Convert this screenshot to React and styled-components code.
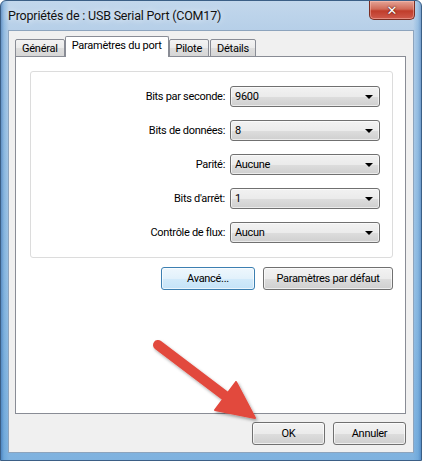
import React from "react"
import styled, { createGlobalStyle } from "styled-components"

const Global = createGlobalStyle`
  html, body {
    margin: 0;
    padding: 0;
    background: #ffffff;
  }
  * {
    box-sizing: border-box;
  }
`

const Window = styled.div`
  position: relative;
  width: 422px;
  height: 461px;
  display: flex;
  flex-direction: column;
  padding: 0 7px 7px;
  border: 1px solid #3b5f86;
  border-radius: 6px 6px 0 0;
  background:
    linear-gradient(90deg, rgba(40, 100, 170, 0.55) 0, rgba(80, 150, 210, 0.35) 3px, rgba(0, 0, 0, 0) 8px),
    linear-gradient(270deg, rgba(40, 100, 170, 0.45) 0, rgba(80, 150, 210, 0.3) 3px, rgba(0, 0, 0, 0) 8px),
    linear-gradient(180deg, #c2d7ec 0, #b6cfe8 30px, #9cc3e5 60%, #7fb2df 100%);
  font-family: Roboto, "Liberation Sans", Arial, sans-serif;
  color: #000;
  overflow: hidden;
`

const TitleBar = styled.div`
  height: 29px;
  display: flex;
  align-items: flex-start;
  justify-content: space-between;
`

const Title = styled.div`
  margin-top: 7px;
  font-size: 12.5px;
  letter-spacing: -0.2px;
  color: #111;
  text-shadow: 0 0 6px rgba(255, 255, 255, 0.9);
`

const CloseButton = styled.div`
  width: 46px;
  height: 19px;
  margin-right: -1px;
  display: flex;
  align-items: center;
  justify-content: center;
  border: 1px solid #7a2d22;
  border-top: none;
  border-radius: 0 0 5px 5px;
  background: linear-gradient(180deg, #e4a496 0, #d06a58 45%, #c03d2b 55%, #cf5a4c 100%);
  box-shadow: inset 0 0 0 1px rgba(255, 200, 190, 0.45);
  color: #fff;
  font-family: "DejaVu Sans", sans-serif;
  font-weight: bold;
  font-size: 13px;
  text-shadow: 0 0 2px #5a1a10, 0 0 1px #5a1a10;
`

const Client = styled.div`
  flex: 1;
  display: flex;
  flex-direction: column;
  padding: 5px 7px 7px 6px;
  background: #f0f0f0;
  border: 1px solid #8da4bd;
`

const Tabs = styled.div`
  display: flex;
  align-items: flex-end;
  height: 21px;
  position: relative;
  z-index: 1;
`

const Tab = styled.div`
  height: ${(p) => (p.$active ? "21px" : "18px")};
  padding: 0 6px;
  padding-bottom: ${(p) => (p.$active ? "3px" : "0")};
  margin-left: ${(p) => (p.$active ? "-1px" : "0")};
  margin-right: ${(p) => (p.$active ? "0" : "1px")};
  display: flex;
  align-items: center;
  font-size: 11px;
  letter-spacing: -0.25px;
  border: 1px solid #898c95;
  border-bottom: ${(p) => (p.$active ? "none" : "1px solid #898c95")};
  border-radius: 2px 2px 0 0;
  background: ${(p) =>
    p.$active
      ? "#ffffff"
      : "linear-gradient(180deg, #f3f3f3 0, #ebebeb 50%, #dedede 51%, #d6d6d6 100%)"};
  position: relative;
  z-index: ${(p) => (p.$active ? 2 : 0)};
`

const Panel = styled.div`
  flex: 1;
  display: flex;
  flex-direction: column;
  align-items: flex-end;
  margin-top: -1px;
  padding: 14px 12px 0 14px;
  background: #ffffff;
  border: 1px solid #898c95;
`

const Group = styled.div`
  align-self: stretch;
  display: grid;
  grid-template-columns: 1fr 150px;
  column-gap: 5px;
  row-gap: 13px;
  align-items: center;
  padding: 14px 12px 14px 0;
  border: 1px solid #dcdcdc;
  border-radius: 3px;
`

const Label = styled.div`
  text-align: right;
  font-size: 11px;
  letter-spacing: -0.3px;
`

const Combo = styled.div`
  height: 21px;
  display: flex;
  align-items: center;
  justify-content: space-between;
  padding: 0 6px 0 4px;
  font-size: 11px;
  letter-spacing: -0.3px;
  border: 1px solid #707070;
  border-radius: 3px;
  background: linear-gradient(180deg, #f2f2f2 0, #ebebeb 50%, #dddddd 51%, #cfcfcf 100%);
  box-shadow: inset 0 0 0 1px rgba(255, 255, 255, 0.6);
`

const Caret = styled.span`
  width: 0;
  height: 0;
  border-left: 4px solid transparent;
  border-right: 4px solid transparent;
  border-top: 4px solid #000;
  margin-top: 1px;
`

const ButtonRow = styled.div`
  display: flex;
  gap: 8px;
  margin-top: 9px;
`

const Button = styled.div`
  width: ${(p) => p.$w}px;
  height: 23px;
  display: flex;
  align-items: center;
  justify-content: center;
  font-size: 11px;
  letter-spacing: -0.3px;
  border: 1px solid ${(p) => (p.$focus ? "#3c7fb1" : "#707070")};
  border-radius: 3px;
  background: ${(p) =>
    p.$focus
      ? "linear-gradient(180deg, #eef7fd 0, #e2f1fb 50%, #d2eafa 51%, #c4e3f8 100%)"
      : "linear-gradient(180deg, #f2f2f2 0, #ebebeb 50%, #dddddd 51%, #cfcfcf 100%)"};
  box-shadow: inset 0 0 0 1px rgba(255, 255, 255, 0.65);
`

const Footer = styled.div`
  display: flex;
  justify-content: flex-end;
  gap: 8px;
  margin-top: 8px;
`

const Overlay = styled.svg`
  position: absolute;
  left: -1px;
  top: -1px;
  width: 422px;
  height: 461px;
  pointer-events: none;
`

const rows = [
  ["Bits par seconde:", "9600"],
  ["Bits de données:", "8"],
  ["Parité:", "Aucune"],
  ["Bits d'arrêt:", "1"],
  ["Contrôle de flux:", "Aucun"],
]

const tabs = ["Général", "Paramètres du port", "Pilote", "Détails"]

const Arrow = () => (
  <Overlay viewBox="0 0 422 461">
    <defs>
      <filter id="shadow" x="-20%" y="-20%" width="140%" height="140%">
        <feDropShadow dx="1.5" dy="2" stdDeviation="1.5" floodColor="#000" floodOpacity="0.35" />
      </filter>
    </defs>
    <g filter="url(#shadow)" fill="#e2483d" stroke="#e2483d">
      <line x1="158" y1="345" x2="228" y2="398" strokeWidth="10" strokeLinecap="round" />
      <polygon points="255,418 236,382 215,410" strokeWidth="2" strokeLinejoin="round" />
    </g>
  </Overlay>
)

export default function App() {
  return (
    <>
      <Global />
      <Window>
        <TitleBar>
          <Title>Propriétés de : USB Serial Port (COM17)</Title>
          <CloseButton>✕</CloseButton>
        </TitleBar>
        <Client>
          <Tabs>
            {tabs.map((t, i) => (
              <Tab key={t} $active={i === 1}>
                {t}
              </Tab>
            ))}
          </Tabs>
          <Panel>
            <Group>
              {rows.map(([label, value]) => (
                <React.Fragment key={label}>
                  <Label>{label}</Label>
                  <Combo>
                    {value}
                    <Caret />
                  </Combo>
                </React.Fragment>
              ))}
            </Group>
            <ButtonRow>
              <Button $w={94} $focus>
                Avancé...
              </Button>
              <Button $w={130}>Paramètres par défaut</Button>
            </ButtonRow>
          </Panel>
          <Footer>
            <Button $w={73}>OK</Button>
            <Button $w={73}>Annuler</Button>
          </Footer>
        </Client>
        <Arrow />
      </Window>
    </>
  )
}
